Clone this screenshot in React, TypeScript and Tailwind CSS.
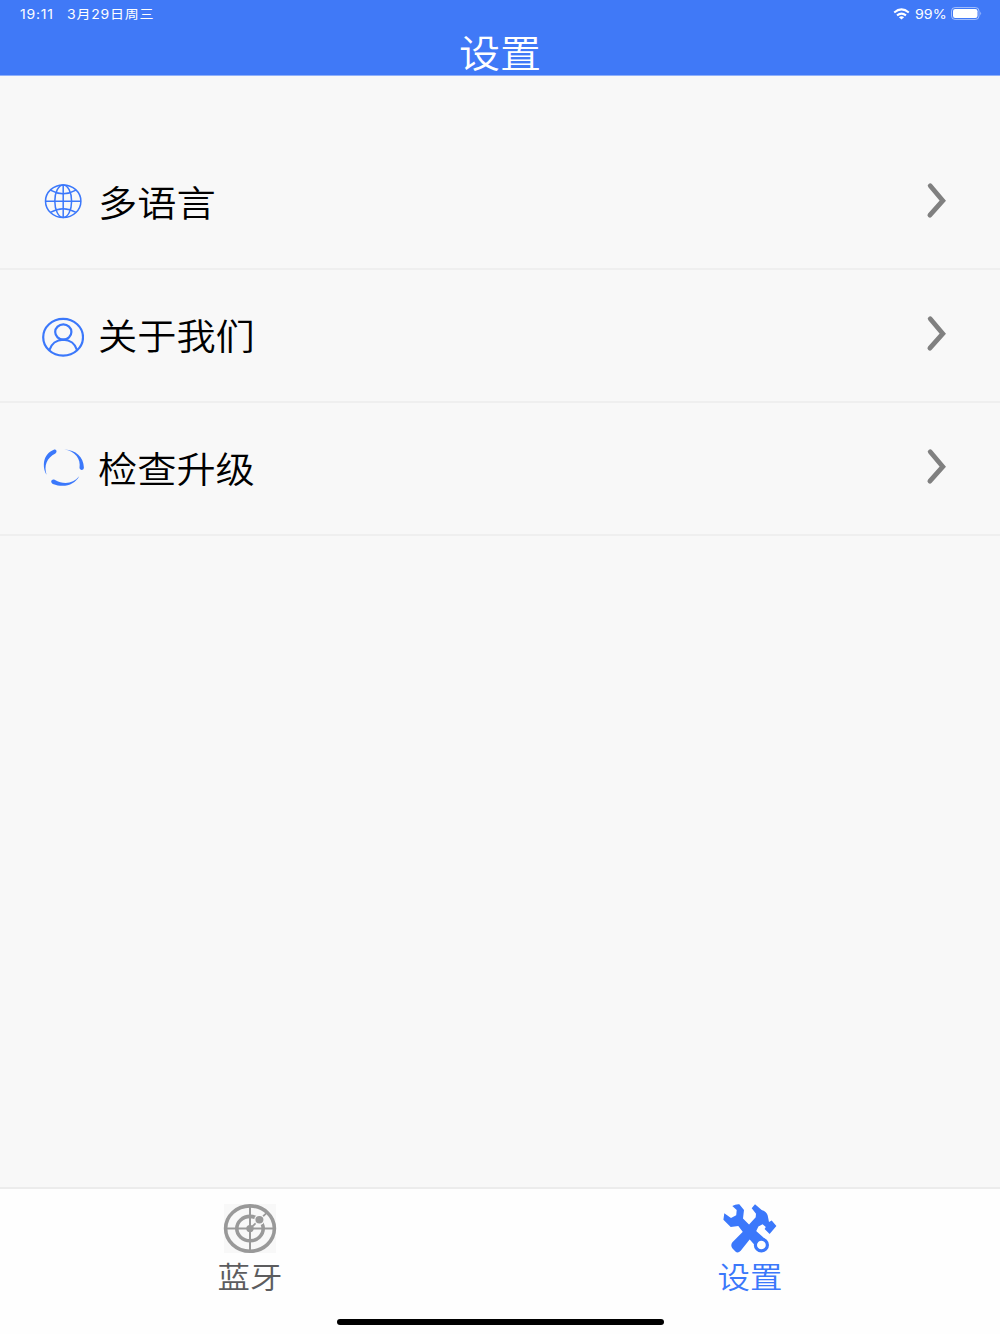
import type { ReactNode } from 'react';

interface SettingItem {
  id: string;
  label: string;
  icon: ReactNode;
}

const GlobeIcon = () => (
  <svg width="42" height="43" viewBox="0 0 42 43" fill="none" stroke="#3b78fb" strokeWidth="1.5">
    <ellipse cx="21.2" cy="20.2" rx="17.7" ry="16.3" />
    <ellipse cx="21.2" cy="20.2" rx="8.4" ry="16.3" />
    <path d="M21.2 3.7v33M3.4 20.2h35.6" />
    <path d="M8.4 9.2Q21.2 16.4 34 9.2M8.4 31.4Q21.2 24 34 31.4" />
  </svg>
);

const AboutIcon = () => (
  <svg width="42" height="43" viewBox="0 0 42 43" fill="none" stroke="#3b78fb" strokeWidth="2.2">
    <ellipse cx="21.1" cy="23.3" rx="19.9" ry="18.4" />
    <ellipse cx="21.3" cy="18" rx="8.1" ry="7.6" />
    <path d="M7.3 36.2C9.2 29.8 14.6 25.8 21.3 25.6C28 25.8 33.3 29.8 35.1 36.2" />
  </svg>
);

const UpdateIcon = () => (
  <svg width="42" height="43" viewBox="0 0 42 43" fill="#3b78fb">
    <path d="M4.6 27.8C0 20 0.6 7.2 11.8 2.7C14.4 2 15.6 5 13.4 6.4C4.6 11 1.8 18.6 4.6 27.8Z" />
    <path d="M22.2 2.5C33.8 2.6 41.6 10.2 41.9 20.4C41.9 23.6 37.8 23.8 37.5 20.8C39 12.4 33.4 3.8 22.2 2.5Z" />
    <path d="M37.2 29.2C32.6 37.8 22.2 41.4 10.8 36.9C7.8 35.2 9.4 31.6 12.6 32.7C22.4 38.2 31 36.4 37.2 29.2Z" />
  </svg>
);

const ChevronIcon = () => (
  <svg width="24" height="43" viewBox="0 0 24 43" fill="none" stroke="#808080" strokeWidth="4.8" strokeLinecap="round">
    <path d="M6.2 4.8L18.8 19.7L5.9 34.2" />
  </svg>
);

const RadarIcon = () => (
  <svg width="54" height="50" viewBox="0 0 54 50" fill="none" stroke="#999999">
    <rect x="1" y="0" width="52" height="49" fill="#f8f8f8" stroke="none" />
    <ellipse cx="27" cy="24.6" rx="24.4" ry="22.7" strokeWidth="3.6" />
    <ellipse cx="27" cy="24.6" rx="13.2" ry="12.2" strokeWidth="3.6" />
    <path d="M27 2v45M2 24.6h50" strokeWidth="2" />
    <path d="M27 24.6L44 8.6" strokeWidth="1.8" />
    <circle cx="36.4" cy="15.8" r="5.2" fill="#f8f8f8" stroke="none" />
    <ellipse cx="36.4" cy="15.8" rx="4" ry="3.7" fill="#999999" stroke="none" />
    <circle cx="27" cy="24.6" r="3.7" fill="#999999" stroke="none" />
  </svg>
);

const ToolsIcon = () => (
  <svg width="54" height="50" viewBox="0 0 54 50" fill="#3b78fb">
    {/* wrench */}
    <path d="M9.3 2Q12.5 0 16.3 0.3L21 6L20 14.5L27 21.5L42 35L33 42.5L19.7 27.7L15.3 22L7.7 23L0.4 15.8L1.3 9.3L8 13.9L13.2 11.3L13.7 6Z" />
    {/* hammer */}
    <path d="M28.7 4.3L32 0.3L38.7 6Q43.6 7.8 44.7 11.6L46 18L48.7 16.5L53.4 22L46.6 30L41.6 24.9L42.8 23L39.6 20.2L35.4 22.6L33 27.4L17.7 46.7Q14.8 49.9 12.4 47.4L9.3 44.3Q7.2 41 9.4 38.2L19.6 28L27 19.5L32.7 13.2L33 9.8Z" />
    <ellipse cx="38.4" cy="41" rx="6" ry="5.9" fill="#fefefe" stroke="#3b78fb" strokeWidth="3.2" />
  </svg>
);

const settings: SettingItem[] = [
  { id: 'language', label: '多语言', icon: <GlobeIcon /> },
  { id: 'about', label: '关于我们', icon: <AboutIcon /> },
  { id: 'update', label: '检查升级', icon: <UpdateIcon /> },
];

function StatusBar() {
  return (
    <div className="flex h-[27px] items-center justify-between pl-5 pr-[18px] font-['Inter','Noto_Sans_CJK_SC',sans-serif] text-[12.5px] leading-none">
      <div className="flex origin-left scale-x-[1.12] gap-[9px] pt-[3px]">
        <span className="w-[33px] tracking-[0.7px]">19:11</span>
        <span className="tracking-[0.7px]">3月29日周三</span>
      </div>
      <div className="flex items-center gap-[5px]">
        <svg width="17" height="12" viewBox="0 0 17 12" fill="none" stroke="#fff" strokeWidth="2">
          <path d="M1.2 4.4Q8.5 -1.7 15.8 4.4M4 7.4Q8.5 3.8 13 7.4" />
          <path d="M8.5 11.4L5.9 9.2Q8.5 7.4 11.1 9.2Z" fill="#fff" stroke="none" />
        </svg>
        <span className="w-[31px] pt-[3px]">
          <span className="inline-block origin-left scale-x-[1.14]">99%</span>
        </span>
        <svg width="31" height="13" viewBox="0 0 31 13" fill="none">
          <rect x="0.5" y="0.5" width="27.5" height="12" rx="3.6" stroke="#fff" strokeOpacity="0.5" />
          <rect x="2" y="2" width="24.5" height="9" rx="2.2" fill="#fff" />
          <path d="M29.4 4.6Q31 6.5 29.4 8.4Z" fill="#fff" fillOpacity="0.6" />
        </svg>
      </div>
    </div>
  );
}

function SettingRow({ item }: { item: SettingItem }) {
  return (
    <button className="flex h-[133px] w-full items-center border-b-2 border-[#efefef] pl-[42px] pr-[52px] text-left">
      {item.icon}
      <span className="ml-[14px] flex-1 origin-left scale-x-[1.08] pt-[6px] text-[36.3px] font-[350] leading-none text-black">
        {item.label}
      </span>
      <ChevronIcon />
    </button>
  );
}

export default function App() {
  return (
    <div className="flex h-[1334px] w-[1000px] flex-col overflow-hidden bg-[#f8f8f8] font-['Liberation_Sans','Noto_Sans_CJK_SC',sans-serif]">
      <header className="h-[76px] border-b border-[#8fb0fa] bg-[#4079f7] text-white">
        <StatusBar />
        <h1 className="text-center text-[38px] font-[350] leading-[54px]">
          <span className="inline-block scale-x-[1.08]">设置</span>
        </h1>
      </header>

      <main className="flex-1 pt-[61px]">
        {settings.map((item) => (
          <SettingRow key={item.id} item={item} />
        ))}
      </main>

      <footer className="flex h-[147px] flex-col items-center border-t-2 border-[#ececec] bg-[#fefefe]">
        <nav className="grid w-full grid-cols-2 pt-[15px] text-[30px] font-[350] leading-[48px]">
          <button className="flex flex-col items-center text-[#5c5c5e]">
            <RadarIcon />
            <span className="scale-x-[1.08]">蓝牙</span>
          </button>
          <button className="flex flex-col items-center text-[#3b78fb]">
            <ToolsIcon />
            <span className="scale-x-[1.08]">设置</span>
          </button>
        </nav>
        <div className="mt-[17px] h-[6px] w-[327px] shrink-0 rounded-full bg-black" />
      </footer>
    </div>
  );
}
